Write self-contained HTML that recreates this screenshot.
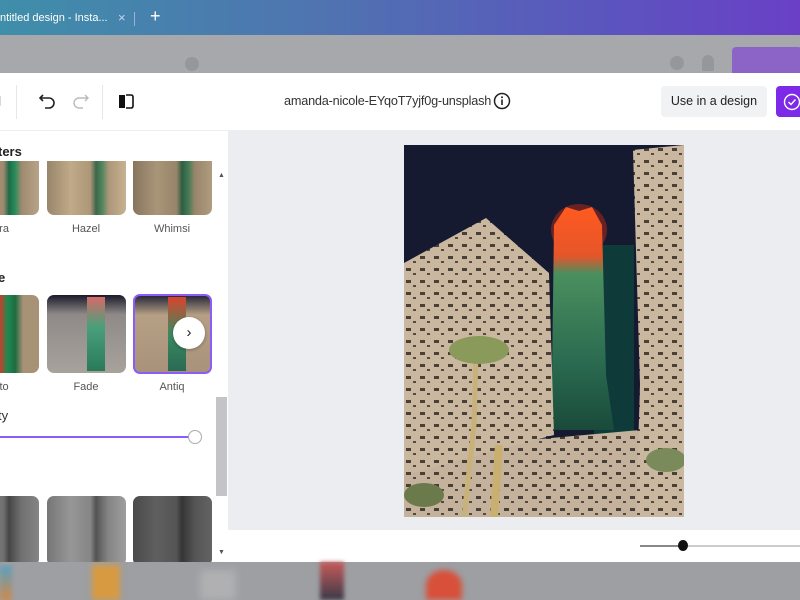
<!DOCTYPE html>
<html><head><meta charset="utf-8"><style>
*{margin:0;padding:0;box-sizing:border-box}
body{width:800px;height:600px;overflow:hidden;position:relative;font-family:"Liberation Sans",sans-serif;background:#a3a5a8}
.abs{position:absolute}
.tabbar{left:0;top:0;width:800px;height:35px;background:linear-gradient(90deg,#3f8eaa 0%,#4f74b0 40%,#5b55be 75%,#6a40c6 100%)}
.gray{left:0;top:35px;width:800px;height:38px;background:#a6a8ab}
.header{left:0;top:73px;width:800px;height:58px;background:#fff;border-bottom:1px solid #eceef0}
.panel{left:0;top:131px;width:228px;height:431px;background:#fff;overflow:hidden}
.canvas{left:228px;top:131px;width:572px;height:399px;background:#ebedf0}
.bottombar{left:228px;top:530px;width:572px;height:32px;background:#fff}
.lower{left:0;top:562px;width:800px;height:38px;background:#9d9fa3}
.th{position:absolute;border-radius:7px;overflow:hidden;background:linear-gradient(90deg,#8e7a63 0%,#b19c80 30%,#a08a6e 55%,#1f6a4a 62%,#2a8c5a 70%,#9f8a70 78%,#b8a388 100%)}
.th.bw{filter:grayscale(1) brightness(.8)}
.lbl{position:absolute;font-size:11px;color:#555;text-align:center;width:78px}
.h{position:absolute;font-size:13px;font-weight:bold;color:#222}
</style></head><body>
<div class="abs tabbar"></div>
<div class="abs" style="left:0;top:12px;font-size:11px;color:#fff">ntitled design - Insta...</div>
<div class="abs" style="left:118px;top:10px;font-size:13px;color:#c9d4ee">×</div>
<div class="abs" style="left:134px;top:12px;width:1px;height:14px;background:#9db0d8"></div>
<div class="abs" style="left:150px;top:6px;font-size:18px;color:#fff">+</div>
<div class="abs gray"></div>
<div class="abs" style="left:185px;top:57px;width:14px;height:14px;border-radius:50%;background:#95979a"></div>
<div class="abs" style="left:670px;top:56px;width:14px;height:14px;border-radius:50%;background:#95979a"></div>
<div class="abs" style="left:702px;top:55px;width:12px;height:16px;border-radius:6px 6px 2px 2px;background:#95979a"></div>
<div class="abs" style="left:732px;top:47px;width:70px;height:26px;border-radius:4px 4px 0 0;background:#8c64c8"></div>

<div class="abs header"></div>
<div class="abs" style="left:-2px;top:93px;font-size:14px;color:#222">l</div>
<div class="abs" style="left:16px;top:85px;width:1px;height:34px;background:#e6e7ea"></div>
<svg class="abs" style="left:38px;top:92px" width="20" height="18" viewBox="0 0 20 18"><path d="M5 3 L2 6 L5 9 M2 6 H11 A5 5 0 0 1 11 16 H7" fill="none" stroke="#222" stroke-width="1.6"/></svg>
<svg class="abs" style="left:70px;top:92px" width="20" height="18" viewBox="0 0 20 18"><path d="M15 3 L18 6 L15 9 M18 6 H9 A5 5 0 0 0 9 16 H13" fill="none" stroke="#bbb" stroke-width="1.4"/></svg>
<div class="abs" style="left:102px;top:85px;width:1px;height:34px;background:#e6e7ea"></div>
<svg class="abs" style="left:117px;top:94px" width="18" height="16" viewBox="0 0 18 16"><rect x="2" y="1" width="6" height="13" fill="#111"/><path d="M9 1 H14 Q16 1 16 3 V12 Q16 14 14 14 H9" fill="none" stroke="#111" stroke-width="1.6"/></svg>
<div class="abs" style="left:284px;top:94px;font-size:12.7px;letter-spacing:-0.2px;color:#333">amanda-nicole-EYqoT7yjf0g-unsplash</div>
<svg class="abs" style="left:493px;top:92px" width="18" height="18" viewBox="0 0 18 18"><circle cx="9" cy="9" r="7.5" fill="none" stroke="#222" stroke-width="1.5"/><rect x="8.2" y="7.5" width="1.6" height="5.5" fill="#222"/><circle cx="9" cy="5.2" r="1" fill="#222"/></svg>
<div class="abs" style="left:661px;top:86px;width:106px;height:31px;border-radius:4px;background:#f1f2f4;font-size:12.5px;color:#222;text-align:center;line-height:31px">Use in a design</div>
<div class="abs" style="left:776px;top:86px;width:30px;height:31px;border-radius:4px;background:#7d2ae8"></div>
<svg class="abs" style="left:783px;top:93px" width="18" height="18" viewBox="0 0 18 18"><circle cx="9" cy="9" r="7.5" fill="none" stroke="#fff" stroke-width="1.4"/><path d="M5.5 9 L8 11.5 L12.5 6.5" fill="none" stroke="#fff" stroke-width="1.4"/></svg>

<div class="abs panel">
 <div class="h" style="left:-2px;top:13px">ters</div>
 <div class="th" style="left:-40px;top:30px;width:79px;height:54px;border-radius:0 0 7px 7px"></div>
 <div class="th" style="left:47px;top:30px;width:79px;height:54px;border-radius:0 0 7px 7px;filter:sepia(.4)"></div>
 <div class="th" style="left:133px;top:30px;width:79px;height:54px;border-radius:0 0 7px 7px;filter:sepia(.3) brightness(.9)"></div>
 <div class="lbl" style="left:-38px;top:92px">ara</div>
 <div class="lbl" style="left:47px;top:92px">Hazel</div>
 <div class="lbl" style="left:133px;top:92px">Whimsi</div>
 <div class="h" style="left:-2px;top:139px">e</div>
 <div class="th" style="left:-40px;top:164px;width:79px;height:78px;background:linear-gradient(90deg,#9a8770 0%,#b29a7e 40%,#d33a2a 50%,#1d8a50 60%,#1e6b40 70%,#a89276 80%)"></div>
 <div class="th" style="left:47px;top:164px;width:79px;height:78px;background:linear-gradient(180deg,#1a1a2a 0%,#8f8a88 25%,#a7a29c 100%)"></div>
 <div class="abs" style="left:87px;top:166px;width:18px;height:74px;background:linear-gradient(180deg,#d56a6a,#4aa07a 40%,#2a7a5a)"></div>
 <div class="th" style="left:133px;top:163px;width:79px;height:80px;border:2px solid #8b5cf6;background:linear-gradient(180deg,#2a2a3a 0%,#b59f85 25%,#a8937a 100%)"></div>
 <div class="abs" style="left:168px;top:166px;width:18px;height:74px;background:linear-gradient(180deg,#d9442c,#3a8a60 50%,#2a6a55)"></div>
 <div class="abs" style="left:173px;top:186px;width:32px;height:32px;border-radius:50%;background:#fff;box-shadow:0 1px 3px rgba(0,0,0,.3);font-size:15px;text-align:center;line-height:31px;color:#222">›</div>
 <div class="lbl" style="left:-38px;top:250px">nto</div>
 <div class="lbl" style="left:47px;top:250px">Fade</div>
 <div class="lbl" style="left:133px;top:250px">Antiq</div>
 <div class="abs" style="left:-2px;top:277px;font-size:13px;color:#333">ty</div>
 <div class="abs" style="left:0;top:305px;width:190px;height:2px;background:#8b5cf6"></div>
 <div class="abs" style="left:188px;top:299px;width:14px;height:14px;border-radius:50%;background:#fff;border:1px solid #aaa"></div>
 <div class="th bw" style="left:-40px;top:365px;width:79px;height:70px"></div>
 <div class="th bw" style="left:47px;top:365px;width:79px;height:70px;filter:grayscale(1) brightness(.95)"></div>
 <div class="th bw" style="left:133px;top:365px;width:79px;height:70px;filter:grayscale(1) brightness(.6)"></div>
 <div class="abs" style="left:216px;top:38px;width:11px;height:393px;background:#fff"></div>
 <div class="abs" style="left:216px;top:266px;width:11px;height:99px;background:#c4c4c6"></div>
 <div class="abs" style="left:218px;top:41px;font-size:7px;color:#555">▲</div>
 <div class="abs" style="left:218px;top:418px;font-size:7px;color:#555">▼</div>
</div>

<div class="abs canvas"></div>
<svg class="abs" style="left:404px;top:145px" width="280" height="372" viewBox="0 0 280 372">
 <defs><pattern id="p" width="14" height="12" patternUnits="userSpaceOnUse"><rect width="14" height="12" fill="#c9b79f"/><rect x="2" y="3" width="5" height="3" fill="#4a4036"/><rect x="9" y="8" width="3" height="2" fill="#564a3e"/></pattern>
 <linearGradient id="t" x1="0" y1="0" x2="0" y2="1"><stop offset="0" stop-color="#ff5a20"/><stop offset=".22" stop-color="#e5552a"/><stop offset=".3" stop-color="#4a8f5e"/><stop offset=".7" stop-color="#2a6a50"/><stop offset="1" stop-color="#1a4a3a"/></linearGradient></defs>
 <rect width="280" height="372" fill="#151a30"/>
 <rect x="190" y="100" width="40" height="190" fill="#0f3a3a"/>
 <ellipse cx="175" cy="85" rx="28" ry="26" fill="#a0281a" opacity=".6"/>
 <polygon points="150,80 162,62 175,66 188,62 198,80 202,230 210,285 146,285 148,230" fill="url(#t)"/>
 <polygon points="0,118 82,73 145,128 150,290 0,330" fill="url(#p)"/>
 <polygon points="229,5 280,0 280,372 232,372 236,240" fill="url(#p)"/>
 <polygon points="0,330 70,300 236,285 280,290 280,372 0,372" fill="url(#p)" opacity=".97"/>
 <path d="M60 372 L70 280 L72 210" stroke="#c8b27a" stroke-width="5" fill="none"/>
 <ellipse cx="75" cy="205" rx="30" ry="14" fill="#8a9a5a"/>
 <path d="M90 372 L95 300" stroke="#c9b070" stroke-width="8" fill="none"/>
 <ellipse cx="262" cy="315" rx="20" ry="12" fill="#7a8a5a"/>
 <ellipse cx="20" cy="350" rx="20" ry="12" fill="#6a7a4a"/>
</svg>
<div class="abs bottombar"></div>
<div class="abs" style="left:640px;top:545px;width:160px;height:2px;background:#ccc"></div>
<div class="abs" style="left:640px;top:545px;width:44px;height:2px;background:#888"></div>
<div class="abs" style="left:678px;top:540px;width:10px;height:11px;border-radius:50%;background:#111"></div>

<div class="abs lower"></div>
<div class="abs" style="left:0;top:566px;width:12px;height:34px;background:linear-gradient(180deg,#5aa0c0,#d08a4a);filter:blur(2px)"></div>
<div class="abs" style="left:92px;top:565px;width:28px;height:35px;background:#d89a40;filter:blur(3px)"></div>
<div class="abs" style="left:200px;top:570px;width:36px;height:30px;background:#b0b0b2;filter:blur(4px)"></div>
<div class="abs" style="left:320px;top:562px;width:24px;height:38px;background:linear-gradient(180deg,#c85a5a,#3a3a48);filter:blur(2px)"></div>
<div class="abs" style="left:426px;top:570px;width:36px;height:30px;border-radius:50% 50% 0 0;background:#d8503a;filter:blur(3px)"></div>
</body></html>
